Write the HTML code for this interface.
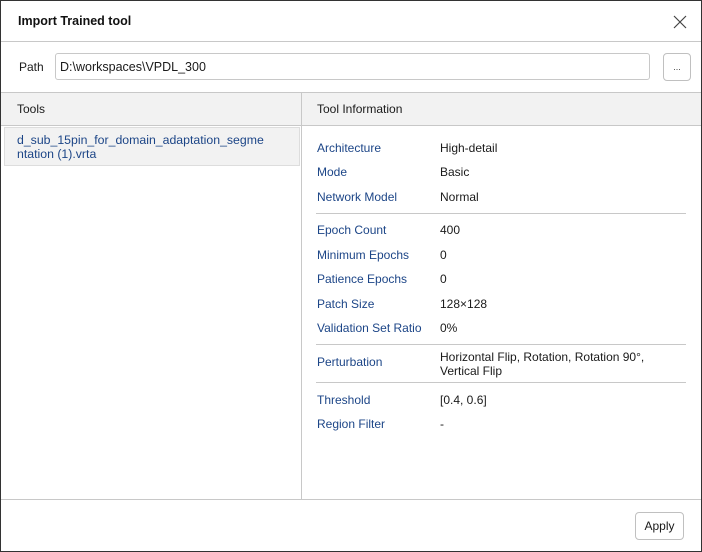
<!DOCTYPE html>
<html><head><meta charset="utf-8"><style>
*{margin:0;padding:0;box-sizing:border-box}
body{width:702px;height:552px;position:relative;background:#fff;font-family:"Liberation Sans",sans-serif;font-size:12px;color:#1a1a1a;overflow:hidden}
.a{position:absolute}
.frame{left:0;top:0;width:702px;height:552px;border:1px solid #333}
.hl{height:1px;background:#c8c8c8}
.lab{color:#1c4587;left:317px}
.val{left:440px}
</style></head><body>
<div class="a frame"></div>
<div class="a" style="left:18px;top:14px;font-weight:bold;font-size:12.5px;color:#111">Import Trained tool</div>
<svg class="a" style="left:673px;top:15px" width="14" height="14"><path d="M1 1L13 13M13 1L1 13" stroke="#444" stroke-width="1.2"/></svg>
<div class="a hl" style="left:1px;top:41px;width:700px"></div>
<div class="a" style="left:19px;top:60px">Path</div>
<div class="a" style="left:55px;top:53px;width:595px;height:27px;border:1px solid #c8c8c8;border-radius:3px;padding:6px 0 0 4px;font-size:12.5px">D:\workspaces\VPDL_300</div>
<div class="a" style="left:663px;top:53px;width:28px;height:28px;border:1px solid #c0c0c0;border-radius:4px;text-align:center;line-height:26px;font-size:9px;color:#444">...</div>
<div class="a hl" style="left:1px;top:92px;width:700px"></div>
<div class="a" style="left:1px;top:93px;width:700px;height:32px;background:#f2f2f2"></div>
<div class="a hl" style="left:1px;top:125px;width:700px"></div>
<div class="a" style="left:301px;top:93px;width:1px;height:406px;background:#c8c8c8"></div>
<div class="a" style="left:17px;top:102px">Tools</div>
<div class="a" style="left:317px;top:102px">Tool Information</div>
<div class="a" style="left:4px;top:127px;width:296px;height:39px;background:#f2f2f2;border:1px solid #ddd"></div>
<div class="a" style="left:17px;top:133px;color:#1c4587;line-height:14px;font-size:12.3px">d_sub_15pin_for_domain_adaptation_segme<br>ntation (1).vrta</div>
<div class="a lab" style="top:141px">Architecture</div><div class="a val" style="top:141px">High-detail</div>
<div class="a lab" style="top:165px">Mode</div><div class="a val" style="top:165px">Basic</div>
<div class="a lab" style="top:190px">Network Model</div><div class="a val" style="top:190px">Normal</div>
<div class="a hl" style="left:316px;top:213px;width:370px"></div>
<div class="a lab" style="top:223px">Epoch Count</div><div class="a val" style="top:223px">400</div>
<div class="a lab" style="top:248px">Minimum Epochs</div><div class="a val" style="top:248px">0</div>
<div class="a lab" style="top:272px">Patience Epochs</div><div class="a val" style="top:272px">0</div>
<div class="a lab" style="top:297px">Patch Size</div><div class="a val" style="top:297px">128×128</div>
<div class="a lab" style="top:321px">Validation Set Ratio</div><div class="a val" style="top:321px">0%</div>
<div class="a hl" style="left:316px;top:344px;width:370px"></div>
<div class="a lab" style="top:355px">Perturbation</div><div class="a val" style="top:350px;line-height:14px">Horizontal Flip, Rotation, Rotation 90°,<br>Vertical Flip</div>
<div class="a hl" style="left:316px;top:382px;width:370px"></div>
<div class="a lab" style="top:393px">Threshold</div><div class="a val" style="top:393px">[0.4, 0.6]</div>
<div class="a lab" style="top:417px">Region Filter</div><div class="a val" style="top:417px">-</div>
<div class="a hl" style="left:1px;top:499px;width:700px"></div>
<div class="a" style="left:635px;top:512px;width:49px;height:28px;border:1px solid #c0c0c0;border-radius:4px;text-align:center;line-height:26px">Apply</div>
</body></html>
